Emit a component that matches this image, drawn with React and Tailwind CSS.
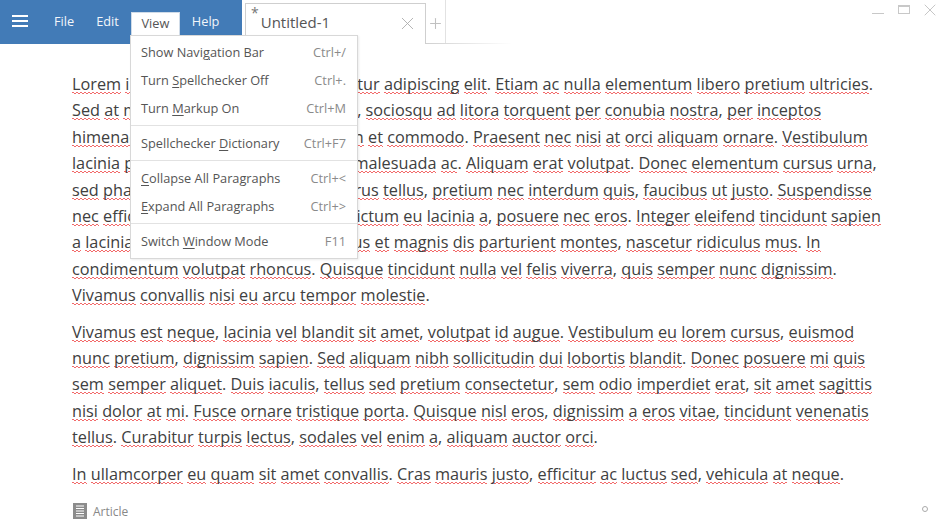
import { X, Plus } from 'lucide-react';

const FONT = 'font-["Open_Sans","Noto_Sans",sans-serif]';

const paragraphs = [
  [
    'Lorem ipsum dolor sit amet, consectetur adipiscing elit. Etiam ac nulla elementum libero pretium ultricies.',
    'Sed at magna erat. Class aptent tacite, sociosqu ad litora torquent per conubia nostra, per inceptos',
    'himenaeos. Nec vitae, nunc aliquam in et commodo. Praesent nec nisi at orci aliquam ornare. Vestibulum',
    'lacinia pretium nisl, sed tempor nibh malesuada ac. Aliquam erat volutpat. Donec elementum cursus urna,',
    'sed pharetra nulla, id mauris sem, purus tellus, pretium nec interdum quis, faucibus ut justo. Suspendisse',
    'nec efficitur ante, vitae mattis nunc, dictum eu lacinia a, posuere nec eros. Integer eleifend tincidunt sapien',
    'a lacinia. Cum sociis natoque penatibus et magnis dis parturient montes, nascetur ridiculus mus. In',
    'condimentum volutpat rhoncus. Quisque tincidunt nulla vel felis viverra, quis semper nunc dignissim.',
    'Vivamus convallis nisi eu arcu tempor molestie.',
  ],
  [
    'Vivamus est neque, lacinia vel blandit sit amet, volutpat id augue. Vestibulum eu lorem cursus, euismod',
    'nunc pretium, dignissim sapien. Sed aliquam nibh sollicitudin dui lobortis blandit. Donec posuere mi quis',
    'sem semper aliquet. Duis iaculis, tellus sed pretium consectetur, sem odio imperdiet erat, sit amet sagittis',
    'nisi dolor at mi. Fusce ornare tristique porta. Quisque nisl eros, dignissim a eros vitae, tincidunt venenatis',
    'tellus. Curabitur turpis lectus, sodales vel enim a, aliquam auctor orci.',
  ],
  ['In ullamcorper eu quam sit amet convallis. Cras mauris justo, efficitur ac luctus sed, vehicula at neque.'],
];

const menuGroups = [
  [
    { before: 'Show Navi', key: 'g', after: 'ation Bar', shortcut: 'Ctrl+/' },
    { before: 'Turn ', key: 'S', after: 'pellchecker Off', shortcut: 'Ctrl+.' },
    { before: 'Turn ', key: 'M', after: 'arkup On', shortcut: 'Ctrl+M' },
  ],
  [{ before: 'Spellchecker ', key: 'D', after: 'ictionary', shortcut: 'Ctrl+F7' }],
  [
    { before: '', key: 'C', after: 'ollapse All Paragraphs', shortcut: 'Ctrl+<' },
    { before: '', key: 'E', after: 'xpand All Paragraphs', shortcut: 'Ctrl+>' },
  ],
  [{ before: 'Switch ', key: 'W', after: 'indow Mode', shortcut: 'F11' }],
];

// every word gets the spellchecker squiggle, spaces and punctuation don't
function SpellLine({ text }) {
  return (
    <div className="whitespace-nowrap">
      {text.split(/([^A-Za-z]+)/).map((part, i) =>
        /[A-Za-z]/.test(part) ? (
          <span
            key={i}
            className="bg-[linear-gradient(90deg,#f26a6a_50%,transparent_50%),linear-gradient(90deg,#f26a6a_50%,transparent_50%)] bg-size-[4px_1px] bg-position-[0_calc(100%-2px),2px_calc(100%-1px)] bg-repeat-x"
          >
            {part}
          </span>
        ) : (
          <span key={i}>{part}</span>
        )
      )}
    </div>
  );
}

function ViewMenu() {
  return (
    <div className="absolute left-[130px] top-[35px] z-10 w-[228px] border border-[#d8d8d8] bg-white pt-[3px] pb-[2px] text-[12.75px] text-[#555] shadow-[1px_1px_2px_rgba(0,0,0,0.08)]">
      {menuGroups.map((group, g) => (
        <div key={g} className={g > 0 ? 'mt-[2px] border-t border-[#e2e2e2] pt-[4px]' : ''}>
          {group.map((item) => (
            <div key={item.shortcut} className="flex h-[28px] items-center justify-between pl-[10px] pr-[11px]">
              <span>
                {item.before}
                <span className="underline underline-offset-2">{item.key}</span>
                {item.after}
              </span>
              <span className="text-[#8a8a8a]">{item.shortcut}</span>
            </div>
          ))}
        </div>
      ))}
    </div>
  );
}

export default function App() {
  return (
    <div className={`relative flex h-[521px] w-[942px] flex-col overflow-hidden bg-white ${FONT}`}>
      <header className="flex h-[44px] shrink-0">
        <div className="flex w-[242px] items-center bg-[#427bb7] pl-[12px] text-[12.75px] text-[#f2f6fa]">
          <svg width="16" height="14" viewBox="0 0 16 14" className="mr-[26px] -mt-[2px]">
            <path d="M0 2h16M0 7h16M0 12h16" stroke="#fff" strokeWidth="2" />
          </svg>
          <span className="mr-[22px]">File</span>
          <span className="mr-[12px]">Edit</span>
          <span className="mb-[9px] mr-[12px] flex h-[23px] w-[49px] items-center justify-center self-end border border-b-0 border-[#cfdbe8] bg-white pb-[1px] text-[#555]">
            View
          </span>
          <span>Help</span>
        </div>
        <div className="ml-[3px] mt-[3px] flex h-[41px] w-[181px] border border-b-0 border-[#cfcfcf]">
          <span className="ml-[5px] mt-[1px] text-[14px] leading-[16px] text-[#777]">*</span>
          <span className="ml-[2px] mt-[8px] text-[15px] leading-[20px] text-[#555]">Untitled-1</span>
          <X size={21} strokeWidth={1} className="ml-[67px] mt-[9px] text-[#aaa]" />
        </div>
        <div className="flex flex-1 flex-col">
          <div className="flex h-[43px]">
            <div className="flex w-[20px] items-center justify-center border-r border-[#e2e2e2] pt-[3px]">
              <Plus size={17} strokeWidth={1.5} className="text-[#c0c0c0]" />
            </div>
            <div className="flex flex-1 justify-end pr-[2px]">
              <div className="mt-[13px] h-px w-[12px] bg-[#c8c8c8]" />
              <div className="ml-[14px] mt-[5px] h-[9px] w-[12px] border border-t-2 border-[#c8c8c8]" />
              <X size={20} strokeWidth={1} className="ml-[10px] text-[#bbb]" />
            </div>
          </div>
          <div className="h-px w-[86px] bg-gradient-to-r from-[#d0d0d0] to-white" />
        </div>
      </header>

      <ViewMenu />

      <main className="flex-1 pl-[72px] pt-[27px] text-[16.25px] leading-[26.4px] text-[#404040]">
        {paragraphs.map((lines, i) => (
          <div key={i} className="mb-[10px]">
            {lines.map((line) => (
              <SpellLine key={line} text={line} />
            ))}
          </div>
        ))}
      </main>

      <footer className="flex h-[20px] shrink-0 items-center pl-[73px] pr-[14px] text-[12px] text-[#888]">
        <svg width="14" height="16" viewBox="0 0 14 16" className="mr-[6px]">
          <rect width="14" height="16" fill="#8c8c8c" />
          <path d="M3 3h8M3 5.5h8M3 8h8M3 10.5h8M3 13h8" stroke="#fff" strokeWidth="1" />
        </svg>
        <span className="mt-px">Article</span>
        <div className="mb-[4px] ml-auto h-[6px] w-[6px] rounded-full border border-[#aaa]" />
      </footer>
    </div>
  );
}
